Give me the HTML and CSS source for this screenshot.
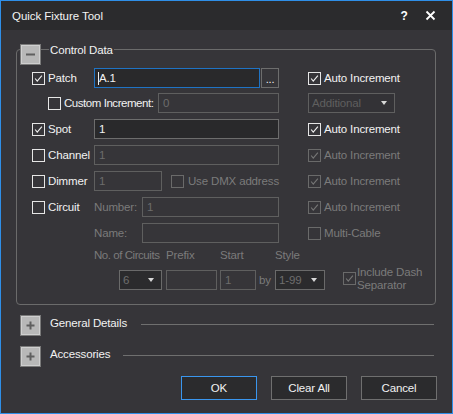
FILE: index.html
```html
<!DOCTYPE html>
<html>
<head>
<meta charset="utf-8">
<link rel="stylesheet" href="styles.css">
</head>
<body>
<div class="win">
  <div class="titlebar">
    <span class="title">Quick Fixture Tool</span>
    <span class="tb-help">?</span>
    <span class="tb-close"><svg width="11" height="11" viewBox="0 0 11 11"><path d="M1.5 1.5 L9.5 9.5 M9.5 1.5 L1.5 9.5" stroke="#ffffff" stroke-width="1.8" fill="none"/></svg></span>
  </div>
  <div class="content">
    <div class="group">
      <div class="group-head">
        <span class="tog"><svg width="13" height="13" viewBox="0 0 13 13"><path d="M2 6.5 H11" stroke="#5f5f5f" stroke-width="2"/></svg></span>
        <span class="legend">Control Data</span>
      </div>

      <div class="row row-patch">
        <div class="lead"><span class="cb on"><svg viewBox="0 0 13 13"><path d="M2.5 6.5 L5 9.5 L10.5 3" /></svg></span><span class="lbl">Patch</span></div>
        <div class="mid"><div class="in focus grow"><span class="caret"></span>A.1</div><div class="btn-dots">...</div></div>
        <div class="right"><span class="cb on"><svg viewBox="0 0 13 13"><path d="M2.5 6.5 L5 9.5 L10.5 3" /></svg></span><span class="lbl">Auto Increment</span></div>
      </div>

      <div class="row row-custom">
        <div class="lead wide"><span class="cb on"></span><span class="lbl tight">Custom Increment:</span><div class="in dis w-custom">0</div></div>
        <div class="right"><div class="combo dis w-add"><span class="ctext">Additional</span><span class="arrow"></span></div></div>
      </div>

      <div class="row">
        <div class="lead"><span class="cb on"><svg viewBox="0 0 13 13"><path d="M2.5 6.5 L5 9.5 L10.5 3" /></svg></span><span class="lbl">Spot</span></div>
        <div class="mid"><div class="in grow">1</div></div>
        <div class="right"><span class="cb on"><svg viewBox="0 0 13 13"><path d="M2.5 6.5 L5 9.5 L10.5 3" /></svg></span><span class="lbl">Auto Increment</span></div>
      </div>

      <div class="row">
        <div class="lead"><span class="cb on"></span><span class="lbl">Channel</span></div>
        <div class="mid"><div class="in dis grow">1</div></div>
        <div class="right"><span class="cb off"><svg viewBox="0 0 13 13"><path d="M2.5 6.5 L5 9.5 L10.5 3" /></svg></span><span class="lbl dim">Auto Increment</span></div>
      </div>

      <div class="row">
        <div class="lead"><span class="cb on"></span><span class="lbl">Dimmer</span></div>
        <div class="mid"><div class="in dis w-dim">1</div><span class="cb off dmx"></span><span class="lbl dim">Use DMX address</span></div>
        <div class="right"><span class="cb off"><svg viewBox="0 0 13 13"><path d="M2.5 6.5 L5 9.5 L10.5 3" /></svg></span><span class="lbl dim">Auto Increment</span></div>
      </div>

      <div class="row">
        <div class="lead"><span class="cb on"></span><span class="lbl">Circuit</span></div>
        <div class="mid"><span class="lbl dim sub">Number:</span><div class="in dis grow">1</div></div>
        <div class="right"><span class="cb off"><svg viewBox="0 0 13 13"><path d="M2.5 6.5 L5 9.5 L10.5 3" /></svg></span><span class="lbl dim">Auto Increment</span></div>
      </div>

      <div class="row">
        <div class="lead"></div>
        <div class="mid"><span class="lbl dim sub">Name:</span><div class="in dis grow"></div></div>
        <div class="right"><span class="cb off"></span><span class="lbl dim">Multi-Cable</span></div>
      </div>

      <div class="circ">
        <span class="lbl dim tight c-no">No. of Circuits</span>
        <span class="lbl dim c-pre">Prefix</span>
        <span class="lbl dim c-start">Start</span>
        <span class="lbl dim c-style">Style</span>
        <div class="combo dark c-combo6"><span class="ctext">6</span><span class="arrow"></span></div>
        <div class="in dis c-prefix"></div>
        <div class="in dis c-startin">1</div>
        <span class="lbl dim c-by">by</span>
        <div class="combo dark c-combo99"><span class="ctext">1-99</span><span class="arrow"></span></div>
        <div class="c-dash"><span class="cb off"><svg viewBox="0 0 13 13"><path d="M2.5 6.5 L5 9.5 L10.5 3" /></svg></span><span class="lbl dim dash">Include Dash<br>Separator</span></div>
      </div>
    </div>

    <div class="section s-general">
      <span class="tog"><svg width="13" height="13" viewBox="0 0 13 13"><path d="M2.5 6.5 H10.5 M6.5 2.5 V10.5" stroke="#5f5f5f" stroke-width="2"/></svg></span>
      <span class="sec-title">General Details</span>
      <span class="sec-line"></span>
    </div>
    <div class="section s-acc">
      <span class="tog"><svg width="13" height="13" viewBox="0 0 13 13"><path d="M2.5 6.5 H10.5 M6.5 2.5 V10.5" stroke="#5f5f5f" stroke-width="2"/></svg></span>
      <span class="sec-title">Accessories</span>
      <span class="sec-line"></span>
    </div>

    <div class="buttons">
      <div class="pbtn default">OK</div>
      <div class="pbtn">Clear All</div>
      <div class="pbtn">Cancel</div>
    </div>
  </div>
</div>
</body>
</html>
```

FILE: styles.css
```css
* { box-sizing: border-box; }
html, body { margin: 0; padding: 0; background: #363539; }
body {
  font-family: "Liberation Sans", Arial, sans-serif;
  font-size: 11px;
  letter-spacing: -0.15px;
  color: #f2f2f2;
}
.win {
  width: 453px;
  height: 414px;
  border: 1px solid #2f8fe8;
  background: #363539;
  display: flex;
  flex-direction: column;
}
.titlebar {
  height: 29px;
  background: #2b2b2d;
  display: flex;
  align-items: center;
  padding-left: 11px;
  flex: none;
}
.title { font-size: 11.5px; letter-spacing: -0.05px; color: #f4f4f4; flex: 1; padding-top: 1px; }
.tb-help { font-weight: bold; font-size: 12px; width: 28px; margin-right: 7px; text-align: center; color: #fff; }
.tb-close { width: 14px; margin-right: 13px; display: flex; align-items: center; }

.content { display: flex; flex-direction: column; padding: 0 16px 0 15px; }

.group {
  margin-top: 19px;
  border: 1px solid #6b6b6b;
  border-radius: 4px;
  height: 256px;
  display: flex;
  flex-direction: column;
}
.group-head {
  display: flex;
  align-items: center;
  height: 21px;
  margin-top: -6px;
  margin-left: 3px;
}
.tog {
  width: 21px;
  height: 21px;
  background: #b8b8b8;
  border: 1px solid #7a7a7a;
  box-shadow: inset 0 0 0 1px #cfcfcf;
  display: flex;
  align-items: center;
  justify-content: center;
  flex: none;
}
.legend {
  background: #363539;
  padding: 0 1px;
  margin-left: 8px;
  margin-top: -9px;
  font-size: 11.5px;
}

.row {
  display: flex;
  align-items: center;
  height: 20px;
  margin-top: 6px;
}
.row-patch { margin-top: 3px; }
.row-custom { margin-top: 5px; }
.lead {
  width: 77px;
  padding-left: 15px;
  display: flex;
  align-items: center;
  flex: none;
}
.lead.wide { width: 262px; padding-left: 31px; }
.mid {
  width: 185px;
  display: flex;
  align-items: center;
  flex: none;
  height: 20px;
}
.right {
  margin-left: 29px;
  display: flex;
  align-items: center;
}

.cb {
  width: 13px;
  height: 13px;
  border: 1px solid #e6e6e6;
  flex: none;
  display: inline-block;
}
.cb svg { width: 11px; height: 11px; display: block; }
.cb svg path { stroke: #f0f0f0; stroke-width: 1.3; fill: none; }
.cb.off { border-color: #6a6a6a; }
.cb.off svg path { stroke: #767676; }
.lbl { margin-left: 3px; white-space: nowrap; font-size: 11.5px; }
.lbl.tight { letter-spacing: -0.45px; }
.lbl.dim { color: #7b7b7b; }
.lbl.sub { margin-left: 0; width: 48px; }

.in {
  height: 20px;
  border: 1px solid #6d6d6d;
  background: #29292b;
  padding-left: 4px;
  display: flex;
  align-items: center;
  font-size: 11.5px;
  color: #f2f2f2;
}
.in.grow { flex: 1; }
.in.focus { border-color: #1f73c4; padding-left: 3px; }
.caret { width: 1px; height: 13px; background: #f0f0f0; margin-right: 0; }
.in.dis { background: #363539; border-color: #5f5f5f; color: #6c6c6c; }
.w-custom { width: 121px; margin-left: auto; }
.w-dim { width: 68px; }
.cb.dmx { margin-left: 9px; margin-right: 1px; }
.btn-dots {
  width: 18px;
  height: 20px;
  border: 1px solid #6d6d6d;
  margin-left: 1px;
  display: flex;
  align-items: flex-end;
  justify-content: center;
  padding-bottom: 4px;
  font-size: 11px;
  line-height: 8px;
}

.combo {
  height: 20px;
  border: 1px solid #5f5f5f;
  background: #333236;
  display: flex;
  align-items: center;
  padding-left: 3px;
  padding-right: 7px;
  color: #5f5f5f;
  font-size: 11.5px;
}
.combo .ctext { flex: 1; }
.combo .arrow {
  width: 0; height: 0;
  border-left: 3.5px solid transparent;
  border-right: 3.5px solid transparent;
  border-top: 4px solid #d8d8d8;
}
.combo.dark { background: #2b2b2d; border-color: #6a6a6a; color: #6e6e6e; }
.w-add { width: 87px; }

.circ {
  display: grid;
  grid-template-columns: 25px 43px 4px 51px 3px 36px 19px 50px 18px auto;
  grid-template-rows: 16px 20px;
  row-gap: 5px;
  margin-left: 77px;
  margin-top: 6px;
}
.circ .lbl { margin-left: 0; }
.c-no { grid-column: 1 / 4; grid-row: 1; }
.c-pre { grid-column: 4; grid-row: 1; }
.c-start { grid-column: 6; grid-row: 1; }
.c-style { grid-column: 8; grid-row: 1; }
.c-combo6 { grid-column: 2; grid-row: 2; }
.c-prefix { grid-column: 4; grid-row: 2; }
.c-startin { grid-column: 6; grid-row: 2; }
.c-by { grid-column: 7; grid-row: 2; align-self: center; margin-left: 3px !important; }
.c-combo99 { grid-column: 8; grid-row: 2; }
.c-dash { grid-column: 10; grid-row: 2; display: flex; align-items: center; margin-top: -3px; }
.lbl.dash { line-height: 12.5px; margin-left: 1px; }

.section {
  display: flex;
  align-items: center;
  height: 21px;
  margin-left: 4px;
}
.s-general { margin-top: 10px; }
.s-acc { margin-top: 10px; }
.sec-title { margin-left: 9px; margin-top: -5px; font-size: 11.5px; }
.sec-line { flex: 1; border-top: 1px solid #6f6f6f; margin-left: 14px; margin-right: 2px; margin-top: -3px; }
.s-acc .sec-line { margin-left: 13px; }

.buttons {
  display: flex;
  justify-content: flex-end;
  gap: 14px;
  margin-top: 9px;
  margin-right: -1px;
}
.pbtn {
  width: 76px;
  height: 24px;
  border: 1px solid #6f6f6f;
  background: #2b2b2d;
  display: flex;
  align-items: center;
  justify-content: center;
  font-size: 11.5px;
}
.pbtn.default { border-color: #3a96ee; }
```
